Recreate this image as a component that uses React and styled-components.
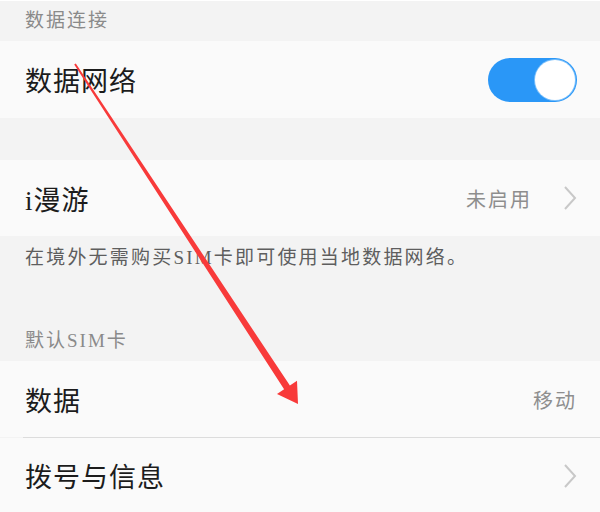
import React from 'react';
import styled, { createGlobalStyle } from 'styled-components';

const GlobalStyle = createGlobalStyle`
	html, body {
		margin: 0;
		padding: 0;
		background: #ffffff;
	}
	body {
		font-family: 'Liberation Serif', 'Noto Sans CJK SC', serif;
	}
`;

const Page = styled.div`
	position: relative;
	width: 600px;
	height: 512px;
	overflow: hidden;
	background: #f3f3f3;
	border-top: 1px solid #ffffff;
	box-sizing: border-box;
`;

const SectionHeader = styled.div`
	height: ${(p) => p.$h}px;
	box-sizing: border-box;
	display: flex;
	align-items: flex-end;
	padding: 0 25px 8px;
	font-size: 19px;
	line-height: 24px;
	letter-spacing: 2px;
	color: #8a8a8a;
`;

const Row = styled.div`
	height: ${(p) => p.$h || 76}px;
	box-sizing: border-box;
	display: flex;
	align-items: center;
	justify-content: space-between;
	padding: 0 23px 0 25px;
	background: #fafafa;
`;

const Divider = styled.div`
	height: 1px;
	margin-left: 23px;
	background: #dcdcdc;
`;

const Label = styled.span`
	font-size: 27px;
	letter-spacing: 1px;
	color: #1c1c1c;
`;

const Right = styled.div`
	display: flex;
	align-items: center;
	gap: 31px;
`;

const Value = styled.span`
	font-size: 20px;
	letter-spacing: 2px;
	color: #8e8e8e;
`;

const Spacer = styled.div`
	height: ${(p) => p.$h}px;
`;

const Note = styled.div`
	padding: 10px 25px 0;
	font-size: 19px;
	line-height: 24px;
	letter-spacing: 2.2px;
	color: #5e5e5e;
`;

const Toggle = styled.div`
	width: 89px;
	height: 44px;
	border-radius: 22px;
	background: #2a97f7;
	position: relative;
	box-sizing: border-box;
	&::after {
		content: '';
		position: absolute;
		top: 2px;
		right: 2px;
		width: 40px;
		height: 40px;
		border-radius: 50%;
		background: #ffffff;
		box-shadow: 0 0 0 1px #7cc0fb;
	}
`;

const Overlay = styled.svg`
	position: absolute;
	top: 0;
	left: 0;
	pointer-events: none;
`;

function Chevron() {
	return (
		<svg width='14' height='24' viewBox='0 0 14 24'>
			<polyline points='2,1 12,12 2,23' fill='none' stroke='#c8c8c8' strokeWidth='2' />
		</svg>
	);
}

export default function App() {
	return (
		<>
			<GlobalStyle />
			<Page>
				<SectionHeader $h={40}>数据连接</SectionHeader>
				<Row $h={77}>
					<Label>数据网络</Label>
					<Toggle />
				</Row>
				<Spacer $h={42} />
				<Row>
					<Label>i漫游</Label>
					<Right>
						<Value>未启用</Value>
						<Chevron />
					</Right>
				</Row>
				<Note>在境外无需购买SIM卡即可使用当地数据网络。</Note>
				<SectionHeader $h={91}>默认SIM卡</SectionHeader>
				<Row>
					<Label>数据</Label>
					<Value>移动</Value>
				</Row>
				<Divider />
				<Row $h={75}>
					<Label>拨号与信息</Label>
					<Chevron />
				</Row>
				<Overlay width='600' height='512' viewBox='0 0 600 512'>
					<polygon
						points='75.8,62.5 289.9,384.4 297,379.7 298,403 277,392.9 284.1,388.2 74.2,63.5'
						fill='#f83a3a'
					/>
				</Overlay>
			</Page>
		</>
	);
}
